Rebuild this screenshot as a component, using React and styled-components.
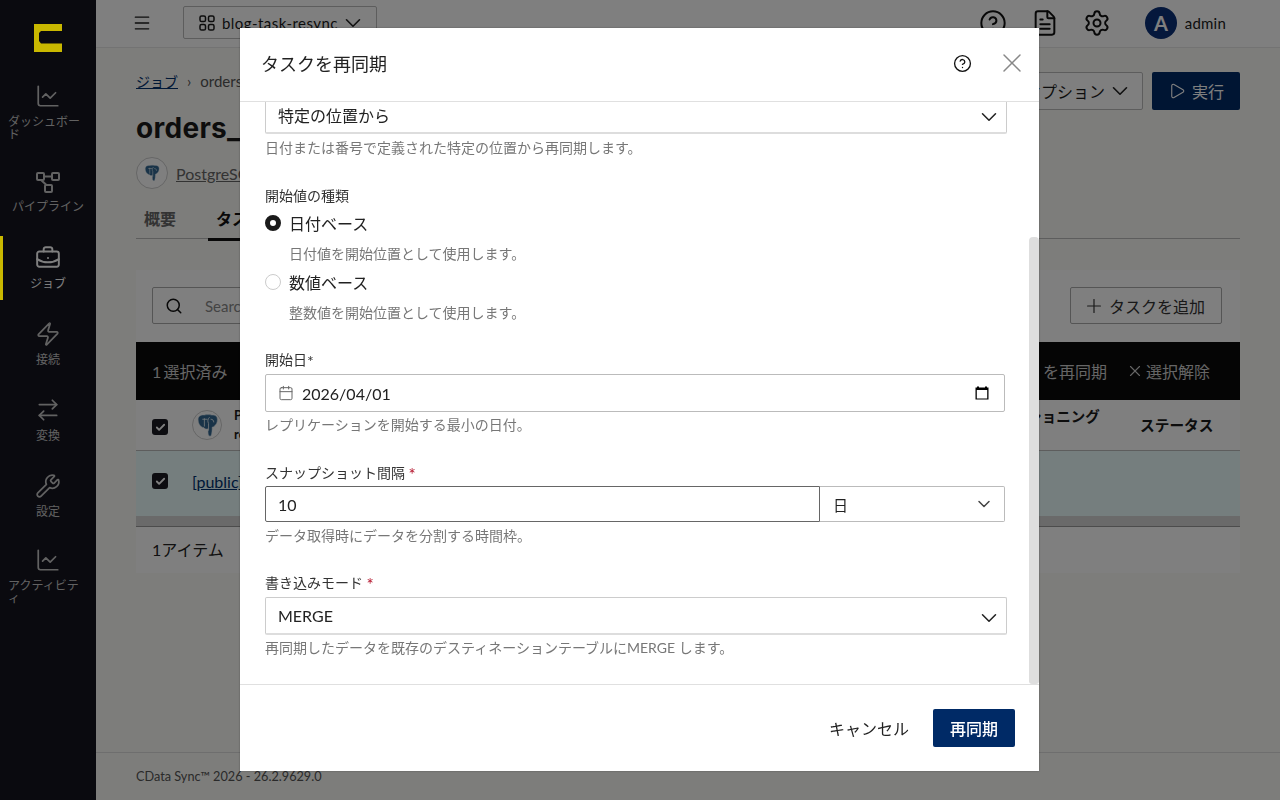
import React from "react";
import styled, { createGlobalStyle } from "styled-components";
import {
  ChartLine, BriefcaseBusiness, Zap, ArrowRightLeft, Wrench, Menu, ChevronDown,
  FileText, Settings, Search, Plus, X, Play, Calendar, CircleHelp, Check,
} from "lucide-react";

const FONT = `"Lato", "Noto Sans CJK JP", sans-serif`;

const Global = createGlobalStyle`
  html, body { margin: 0; padding: 0; height: 100%; overflow: hidden; background: #fafaf6; }
  body { font-family: ${FONT}; color: #1a1a1a; }
  * { box-sizing: border-box; }
`;

const Shell = styled.div`display: flex; height: 800px; width: 1280px;`;

const Sidebar = styled.nav`
  width: 96px; flex: none; background: #14141f; display: flex; flex-direction: column;
  align-items: stretch; padding-top: 24px;
`;
const Logo = styled.svg`
  width: 28px; height: 28px; align-self: center; margin-bottom: 31px; position: relative; z-index: 20; display: block;
`;
const NavItem = styled.div`
  position: relative; height: 64px; margin-bottom: 12.2px; padding: ${(p) => p.$pt ?? 0}px 8px ${(p) => p.$pb ?? 0}px; display: flex; flex-direction: column;
  align-items: center; justify-content: center; gap: 6px;
  color: ${(p) => (p.$active ? "#fff" : "#c4c4c4")};
  svg { flex: none; }
  ${(p) => p.$active && `&::before { content: ""; position: absolute; left: 0; top: 1px; bottom: -1px; width: 3px; background: #c9b800; z-index: 20; }`}
`;
const NavLabel = styled.div`font-size: 12px; line-height: 13px; width: fit-content; max-width: 80px; text-align: left;`;

const Main = styled.div`flex: 1; display: flex; flex-direction: column; min-width: 0;`;
const TopBar = styled.header`
  height: 48px; flex: none; background: #fff; border-bottom: 1px solid #e6e6e6; display: flex; align-items: center;
  padding: 0 54px 2px 36px;
`;
const ProjectSelect = styled.div`
  width: 194px; height: 33px; margin-left: 31px; border: 1px solid #bbb; border-radius: 2px; display: flex; align-items: center;
  padding: 0 7px 0 15px; gap: 2px; font-size: 15px; letter-spacing: .45px; white-space: nowrap;
  svg:first-child { margin-right: 5px; }
`;
const Spacer = styled.div`flex: 1;`;
const TopIcons = styled.div`display: flex; align-items: center; gap: 24px; color: #111;`;
const Avatar = styled.div`
  width: 32px; height: 32px; border-radius: 50%; background: #0a3078; color: #fff; display: flex; align-items: center; justify-content: center;
  font-size: 20px; font-weight: 700; margin-left: 34px;
`;
const UserName = styled.div`font-size: 15px; margin-left: 8px; letter-spacing: .2px;`;

const Content = styled.main`flex: 1; padding: 24px 40px 0; min-height: 0;`;
const HeaderRow = styled.div`display: flex; justify-content: space-between; align-items: flex-start; height: 38px;`;
const Crumbs = styled.div`font-size: 15px; display: flex; align-items: center; gap: 9px; height: 21px; color: #555; margin-top: -2px;`;
const CrumbLink = styled.span`color: #00306e; text-decoration: underline; font-size: 14px;`;
const HeaderActions = styled.div`display: flex; gap: 9px;`;
const OptionButton = styled.button`
  height: 38px; width: 180px; font: inherit; font-size: 16px; background: #fff; border: 1px solid #bbb; border-radius: 2px; color: #1a1a1a;
  display: flex; align-items: center; justify-content: flex-end; gap: 2px; padding: 0 9px;
`;
const RunButton = styled.button`
  height: 38px; width: 88px; font: inherit; font-size: 16px; background: #002a66; border: none; border-radius: 2px; color: #fff;
  display: flex; align-items: center; justify-content: center; gap: 6px;
`;
const Title = styled.h1`font-family: "Inter", "Noto Sans CJK JP", sans-serif; font-size: 28px; line-height: 36px; margin: 0; font-weight: 700; letter-spacing: .3px;`;
const ConnRow = styled.div`display: flex; align-items: center; gap: 8px; margin-top: 11px; color: #666; font-size: 16px;`;
const ConnLink = styled.span`text-decoration: underline;`;
const LogoCircle = styled.div`
  width: ${(p) => p.$size}px; height: ${(p) => p.$size}px; flex: none; border-radius: 50%; background: #fff; border: 1px solid #ccc;
  display: flex; align-items: center; justify-content: center;
`;
const Tabs = styled.div`display: flex; height: 39px; margin-top: 11px; border-bottom: 1px solid #bbb;`;
const Tab = styled.div`
  width: ${(p) => p.$w}px; height: 41px; flex: none; display: flex; align-items: flex-start; justify-content: center; padding: 6px ${(p) => p.$pr ?? 0}px 0 0; font-size: 16px; font-weight: 700;
  color: ${(p) => (p.$active ? "#111" : "#666")};
  ${(p) => p.$active && "border-bottom: 3px solid #111;"}
`;
const Card = styled.section`margin-top: 31px; background: #fff; height: 303px;`;
const Toolbar = styled.div`height: 72px; padding: 17px 18px 0 16px; display: flex; justify-content: space-between;`;
const SearchBox = styled.div`
  width: 400px; height: 37px; border: 1px solid #aaa; border-radius: 2px; display: flex; align-items: center; gap: 22px; padding: 0 12px; color: #111;
  font-size: 15px;
`;
const Placeholder = styled.span`color: #888;`;
const AddButton = styled.button`
  width: 152px; height: 37px; font: inherit; font-size: 16px; background: #fff; border: 1px solid #aaa; border-radius: 2px; color: #333;
  display: flex; align-items: center; justify-content: center; gap: 4px; padding: 0 4px 0 0;
`;
const ActionBar = styled.div`
  height: 58px; background: #0a0a0a; color: #ccc; font-size: 16px; display: flex; align-items: center; justify-content: space-between; padding: 0 30px 0 16px;
`;
const SelectedCount = styled.span`word-spacing: -2px;`;
const ActionRight = styled.div`display: flex; gap: 19px; align-items: center;`;
const ActionItem = styled.span`display: flex; align-items: center; gap: 2px;`;
const HeadRow = styled.div`height: 51px; display: flex; border-bottom: 1px solid #bbb; font-size: 14.5px; font-weight: 700; align-items: center; padding-left: 16px;`;
const Check1 = styled.span`
  width: 16px; height: 16px; flex: none; border-radius: 3px; background: #1a1a22; color: #fff; display: flex; align-items: center; justify-content: center; margin: ${(p) => p.$mt ?? 0}px 24px 0 0;
`;
const NameHead = styled.div`flex: 1; display: flex; align-items: center; gap: 12px; font-size: 13px; line-height: 19px;`;
const PartHead = styled.div`width: 170px; align-self: flex-start; padding-top: 5px; font-size: 14.5px;`;
const StatusHead = styled.div`width: 100px; font-size: 14.7px; padding-bottom: 2px;`;
const DataRow = styled.div`height: 65px; background: #eafcfc; display: flex; align-items: center; padding: 0 0 5px 16px; font-size: 16px;`;
const RowLink = styled.span`color: #00306e; text-decoration: underline;`;
const HScroll = styled.div`height: 11px; background: #d4d4d4; border-bottom: 1px solid #999;`;
const CardFooter = styled.div`height: 46px; padding: 0 0 2px 16px; display: flex; align-items: center; font-size: 16px; color: #222;`;
const PageFooter = styled.footer`
  height: 48px; flex: none; border-top: 1px solid #ddd; padding: 15px 40px 0; font-size: 12.7px; color: #555;
`;

const Backdrop = styled.div`
  position: fixed; inset: 0; background: rgba(0,0,0,.5); z-index: 10; display: flex; align-items: flex-start; justify-content: flex-start; padding: 28px 0 0 240px;
`;
const Modal = styled.div`
  width: 799px; height: 743px; background: #fff; display: flex; flex-direction: column; box-shadow: 0 0 2px rgba(0,0,0,.3); position: relative;
`;
const ModalHead = styled.div`
  height: 74px; flex: none; border-bottom: 1px solid #e0e0e0; display: flex; align-items: center; padding: 0 11px 3px 21px;
`;
const ModalTitle = styled.h2`flex: 1; margin: 0; font-size: 18px; font-weight: 400; color: #222;`;
const CloseBtn = styled.span`color: #888; display: flex; margin-left: 24px;`;
const ModalBody = styled.div`flex: 1; min-height: 0; overflow: hidden; padding: 0 32px 0 25px; position: relative;`;
const ScrollThumb = styled.div`
  position: absolute; right: 0; top: 135px; bottom: 0; width: 10px; background: #dedede; border-radius: 4px 4px 3px 3px;
`;
const Field = styled.div`margin-top: ${(p) => p.$mt ?? 28}px;`;
const Label = styled.div`font-size: 14px; line-height: 20px; color: #333; margin-bottom: ${(p) => p.$mb ?? 4}px;`;
const Req = styled.span`color: #b3122a; font-size: 17px; line-height: 14px; vertical-align: -3px;`;
const Star = styled.span`font-size: 16px; line-height: 14px; vertical-align: -2px;`;
const Help = styled.div`
  font-size: 14px; line-height: 20px; color: #777; margin-top: ${(p) => p.$mt ?? 4}px; padding-left: ${(p) => p.$indent ?? 0}px;
`;
const SelectBox = styled.div`
  height: 38px; border: 1px solid #ccc; border-bottom: 2px solid #ddd; border-radius: 2px; display: flex; align-items: center; justify-content: space-between;
  padding: 0 4px 0 12px; font-size: 16px; color: #222;
  svg { margin-top: 4px; }
`;
const InputBox = styled.div`
  width: 740px; height: 38px; border: 1px solid #bbb; border-radius: 2px; display: flex; align-items: center; padding: 0 14px 0 12px; font-size: 16px; color: #222; gap: 8px;
`;
const DateIcon = styled.span`display: flex; color: #666;`;
const DateValue = styled.span`flex: 1;`;
const Combo = styled.div`width: 740px; height: 36px; display: flex;`;
const NumInput = styled.div`
  flex: 1; border: 1px solid #666; border-radius: 2px 0 0 2px; display: flex; align-items: center; padding: 0 12px; font-size: 16px; color: #222;
`;
const UnitSelect = styled.div`
  width: 185px; flex: none; border: 1px solid #bbb; border-left: none; border-radius: 0 2px 2px 0; display: flex; align-items: center; justify-content: space-between;
  padding: 0 10px 0 13px; font-size: 15px; color: #222;
`;
const RadioRow = styled.div`display: flex; align-items: center; gap: 8px; height: 24px; font-size: 16px; color: #222; margin-top: ${(p) => p.$mt}px;`;
const Radio = styled.span`
  width: 16px; height: 16px; border-radius: 50%; flex: none; background: #fff;
  border: ${(p) => (p.$on ? "5px solid #1a1a1a" : "1px solid #ccc")};
`;
const ModalFoot = styled.div`
  height: 87px; flex: none; border-top: 1px solid #e0e0e0; display: flex; align-items: center; justify-content: flex-end; gap: 24px; padding: 0 24px 0 0;
`;
const CancelBtn = styled.button`background: none; border: none; padding: 0; font: inherit; font-size: 16px; color: #222;`;
const PrimaryBtn = styled.button`
  width: 82px; height: 38px; background: #002a66; color: #fff; border: none; border-radius: 2px; font: inherit; font-size: 16px; font-weight: 500;
`;

const PipelineIcon = () => (
  <svg width="24" height="24" viewBox="0 0 24 24" fill="none" stroke="currentColor" strokeWidth="2" strokeLinejoin="round">
    <rect x="1" y="3" width="7" height="7" rx="1" /><rect x="16" y="3" width="7" height="7" rx="1" /><rect x="9" y="15" width="7" height="7" rx="1" />
    <path d="M8 6.5h8M5 10l5.5 5" />
  </svg>
);
const GridIcon = () => (
  <svg width="16" height="16" viewBox="0 0 16 16" fill="none" stroke="currentColor" strokeWidth="1.5">
    <rect x="1" y="1" width="5.5" height="5.5" rx="1.6" /><rect x="9.5" y="1" width="5.5" height="5.5" rx="1.6" />
    <rect x="1" y="9.5" width="5.5" height="5.5" rx="1.6" /><rect x="9.5" y="9.5" width="5.5" height="5.5" rx="1.6" />
  </svg>
);
const Elephant = ({ size }) => (
  <svg width={size} height={size} viewBox="0 0 24 24">
    <path d="M3 6c0-3 3-4.500 6-4 2-.6 5-.6 7 0 3-.5 5.500 1 5.500 4 0 3-1 5-2.500 6-.5 1-1.500 1.500-2.500 1.500 0 3-.3 6.500-1 8-.6 1-2 1-2.600-.3-.4-1.200-.4-4-.4-6-1.500.6-3.500 0-4-1.200-2.500 0-5.500-3-5.500-8z" fill="#336791" stroke="#dfe8ee" strokeWidth=".5" />
    <path d="M9 5v8M14 4c-2 2-2 4-1 6v7M7 6h5M15 6c2 0 3 1 3 3" fill="none" stroke="#e6eef4" strokeWidth=".8" />
  </svg>
);
const NativeCalendar = () => (
  <svg width="16" height="16" viewBox="0 0 16 16" fill="none">
    <path d="M3 1.500h2v1h6v-1h2v1h1.500v12h-13v-12H3z" fill="#000" />
    <rect x="2.800" y="5" width="10.400" height="8.500" fill="#fff" />
  </svg>
);

const Chev = ({ s = 26, c = "#222", w = 1.4 }) => <ChevronDown size={s} color={c} strokeWidth={w} />;

const nav = [
  { label: "ダッシュボード", pb: 6, icon: <ChartLine size={26} strokeWidth={1.6} /> },
  { label: "パイプライン", icon: <PipelineIcon /> },
  { label: "ジョブ", icon: <BriefcaseBusiness size={26} strokeWidth={1.8} />, active: true },
  { label: "接続", icon: <Zap size={26} strokeWidth={1.6} /> },
  { label: "変換", icon: <ArrowRightLeft size={26} strokeWidth={1.6} /> },
  { label: "設定", icon: <Wrench size={26} strokeWidth={1.6} /> },
  { label: "アクティビティ", pt: 8, icon: <ChartLine size={26} strokeWidth={1.6} /> },
];

export default function App() {
  return (
    <>
      <Global />
      <Shell>
        <Sidebar>
          <Logo viewBox="0 0 28 28"><path d="M0 0h28v7H7L5 9v8l2 2.500h21V28H0z" fill="#c9b800" /></Logo>
          {nav.map((n) => (
            <NavItem key={n.label} $active={n.active} $pt={n.pt} $pb={n.pb}>
              {n.icon}
              <NavLabel>{n.label}</NavLabel>
            </NavItem>
          ))}
        </Sidebar>
        <Main>
          <TopBar>
            <Menu size={20} strokeWidth={1.6} />
            <ProjectSelect><GridIcon />blog-task-resync<Chev s={26} w={1.5} /></ProjectSelect>
            <Spacer />
            <TopIcons>
              <CircleHelp size={28} strokeWidth={1.7} />
              <FileText size={28} strokeWidth={1.7} />
              <Settings size={28} strokeWidth={1.7} />
            </TopIcons>
            <Avatar>A</Avatar>
            <UserName>admin</UserName>
          </TopBar>
          <Content>
            <HeaderRow>
              <Crumbs><CrumbLink>ジョブ</CrumbLink>›<span>orders_public</span></Crumbs>
              <HeaderActions>
                <OptionButton>オプション<Chev s={26} w={1.5} /></OptionButton>
                <RunButton><Play size={18} strokeWidth={1.5} />実行</RunButton>
              </HeaderActions>
            </HeaderRow>
            <Title>orders_</Title>
            <ConnRow>
              <LogoCircle $size={32}><Elephant size={18} /></LogoCircle>
              <ConnLink>PostgreSQL</ConnLink>
            </ConnRow>
            <Tabs><Tab $w={72} $pr={24}>概要</Tab><Tab $w={64} $active>タスク</Tab></Tabs>
            <Card>
              <Toolbar>
                <SearchBox><Search size={18} /><Placeholder>Search</Placeholder></SearchBox>
                <AddButton><Plus size={22} strokeWidth={1.3} />タスクを追加</AddButton>
              </Toolbar>
              <ActionBar>
                <SelectedCount>1 選択済み</SelectedCount>
                <ActionRight>
                  <span>タスク を再同期</span>
                  <ActionItem><X size={18} strokeWidth={1.5} />選択解除</ActionItem>
                </ActionRight>
              </ActionBar>
              <HeadRow>
                <Check1 $mt={4}><Check size={11} strokeWidth={4} /></Check1>
                <NameHead><LogoCircle $size={30}><Elephant size={25} /></LogoCircle><div>PostgreSQL<br />rows</div></NameHead>
                <PartHead>パーティショニング</PartHead>
                <StatusHead>ステータス</StatusHead>
              </HeadRow>
              <DataRow>
                <Check1><Check size={11} strokeWidth={4} /></Check1>
                <RowLink>[public].[orders]</RowLink>
              </DataRow>
              <HScroll />
              <CardFooter>1アイテム</CardFooter>
            </Card>
          </Content>
          <PageFooter>CData Sync™ 2026 - 26.2.9629.0</PageFooter>
        </Main>
      </Shell>
      <Backdrop>
        <Modal>
          <ModalHead>
            <ModalTitle>タスクを再同期</ModalTitle>
            <CircleHelp size={19} strokeWidth={1.7} color="#111" />
            <CloseBtn><X size={32} strokeWidth={1.1} /></CloseBtn>
          </ModalHead>
          <ModalBody>
            <Field $mt={-6}>
              <SelectBox>特定の位置から<Chev /></SelectBox>
              <Help>日付または番号で定義された特定の位置から再同期します。</Help>
            </Field>
            <Field>
              <Label $mb={5}>開始値の種類</Label>
              <RadioRow $mt={0}><Radio $on />日付ベース</RadioRow>
              <Help $mt={9} $indent={24}>日付値を開始位置として使用します。</Help>
              <RadioRow $mt={6}><Radio />数値ベース</RadioRow>
              <Help $mt={9} $indent={24}>整数値を開始位置として使用します。</Help>
            </Field>
            <Field $mt={27}>
              <Label>開始日<Star>*</Star></Label>
              <InputBox>
                <DateIcon><Calendar size={16} strokeWidth={1.5} /></DateIcon>
                <DateValue>2026/04/01</DateValue>
                <NativeCalendar />
              </InputBox>
              <Help $mt={3}>レプリケーションを開始する最小の日付。</Help>
            </Field>
            <Field>
              <Label $mb={3}>スナップショット間隔 <Req>*</Req></Label>
              <Combo>
                <NumInput>10</NumInput>
                <UnitSelect>日<Chev s={20} c="#444" w={1.8} /></UnitSelect>
              </Combo>
              <Help>データ取得時にデータを分割する時間枠。</Help>
            </Field>
            <Field $mt={27}>
              <Label>書き込みモード <Req>*</Req></Label>
              <SelectBox>MERGE<Chev /></SelectBox>
              <Help $mt={3}>再同期したデータを既存のデスティネーションテーブルにMERGE します。</Help>
            </Field>
            <ScrollThumb />
          </ModalBody>
          <ModalFoot>
            <CancelBtn>キャンセル</CancelBtn>
            <PrimaryBtn>再同期</PrimaryBtn>
          </ModalFoot>
        </Modal>
      </Backdrop>
    </>
  );
}
